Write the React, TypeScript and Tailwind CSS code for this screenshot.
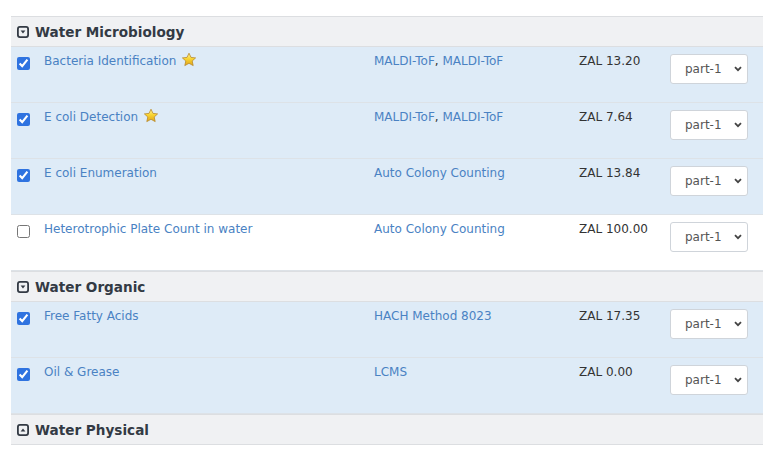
import React from 'react';

type Test = {
  name: string;
  methods: string[];
  price: string;
  checked: boolean;
  star?: boolean;
};

type Group = {
  title: string;
  open: boolean;
  tests: Test[];
};

const groups: Group[] = [
  {
    title: 'Water Microbiology',
    open: true,
    tests: [
      { name: 'Bacteria Identification', methods: ['MALDI-ToF', 'MALDI-ToF'], price: 'ZAL 13.20', checked: true, star: true },
      { name: 'E coli Detection', methods: ['MALDI-ToF', 'MALDI-ToF'], price: 'ZAL 7.64', checked: true, star: true },
      { name: 'E coli Enumeration', methods: ['Auto Colony Counting'], price: 'ZAL 13.84', checked: true },
      { name: 'Heterotrophic Plate Count in water', methods: ['Auto Colony Counting'], price: 'ZAL 100.00', checked: false },
    ],
  },
  {
    title: 'Water Organic',
    open: true,
    tests: [
      { name: 'Free Fatty Acids', methods: ['HACH Method 8023'], price: 'ZAL 17.35', checked: true },
      { name: 'Oil & Grease', methods: ['LCMS'], price: 'ZAL 0.00', checked: true },
    ],
  },
  {
    title: 'Water Physical',
    open: false,
    tests: [],
  },
];

function ToggleIcon({ open }: { open: boolean }) {
  return (
    <svg width="12" height="12" viewBox="0 0 12 12" className="shrink-0">
      <rect x="0.9" y="0.9" width="10.2" height="10.2" rx="2" fill="none" stroke="#333a44" strokeWidth="1.8" />
      {open ? (
        <path d="M3.6 4.6h4.8L6 7.6z" fill="#333a44" />
      ) : (
        <path d="M3.6 7.4h4.8L6 4.4z" fill="#333a44" />
      )}
    </svg>
  );
}

function Star() {
  return (
    <svg width="16" height="16" viewBox="0 0 16 16" className="inline-block ml-[5px] -mt-[3px] align-middle">
      <defs>
        <linearGradient id="starFill" x1="0" y1="0" x2="0" y2="1">
          <stop offset="0" stopColor="#fff3a0" />
          <stop offset="0.45" stopColor="#f9d531" />
          <stop offset="1" stopColor="#e0a21a" />
        </linearGradient>
      </defs>
      <path
        d="M8 1.2l2 4.2 4.6.5-3.4 3.1 1 4.6L8 11.3l-4.2 2.3 1-4.6L1.4 5.9 6 5.4z"
        fill="url(#starFill)"
        stroke="#b98a2a"
        strokeWidth="0.8"
        strokeLinejoin="round"
      />
    </svg>
  );
}

function PartSelect() {
  return (
    <div className="relative w-[78px] h-[30px]">
      <select
        defaultValue="part-1"
        className="appearance-none w-full h-full bg-white border border-[#cfd4da] rounded-[3px] pl-[14px] text-[12px] text-[#555] outline-none"
      >
        <option value="part-1">part-1</option>
        <option value="part-2">part-2</option>
      </select>
      <svg width="8" height="6" viewBox="0 0 8 6" className="absolute right-[6px] top-[12px] pointer-events-none">
        <path d="M1 1.2l3 3 3-3" fill="none" stroke="#444" strokeWidth="1.8" />
      </svg>
    </div>
  );
}

function TestRow({ test }: { test: Test }) {
  return (
    <div
      className={`grid grid-cols-[33px_330px_205px_91px_78px] h-[56px] border-b border-[#dde2e7] ${
        test.checked ? 'bg-[#deebf7]' : 'bg-white'
      }`}
    >
      <div className="pl-[6px] pt-[10px]">
        <input
          type="checkbox"
          defaultChecked={test.checked}
          className="w-[13px] h-[13px] m-0 block accent-[#2f73e0]"
        />
      </div>
      <div className="pt-[6px] text-[#4a82c3]">
        {test.name}
        {test.star && <Star />}
      </div>
      <div className="pt-[6px] text-[#4a82c3]">
        {test.methods.map((m, i) => (
          <span key={i}>
            {i > 0 && <span className="text-[#333]">, </span>}
            {m}
          </span>
        ))}
      </div>
      <div className="pt-[6px] text-[#333]">{test.price}</div>
      <div className="pt-[7px]">
        <PartSelect />
      </div>
    </div>
  );
}

export default function App() {
  return (
    <div className="w-[763px] h-[462px] bg-white overflow-hidden pt-[16px] pl-[11px] text-[12px] leading-[16px] font-['DejaVu_Sans',sans-serif]">
      {groups.map((g) => (
        <div key={g.title}>
          <div className="flex items-center gap-[6px] h-[31px] bg-[#f0f1f3] border-t border-b border-[#dcdee1] pl-[6px] text-[13.6px] font-bold text-[#333a44]">
            <ToggleIcon open={g.open} />
            <span>{g.title}</span>
          </div>
          {g.tests.map((t) => (
            <TestRow key={t.name} test={t} />
          ))}
        </div>
      ))}
    </div>
  );
}
